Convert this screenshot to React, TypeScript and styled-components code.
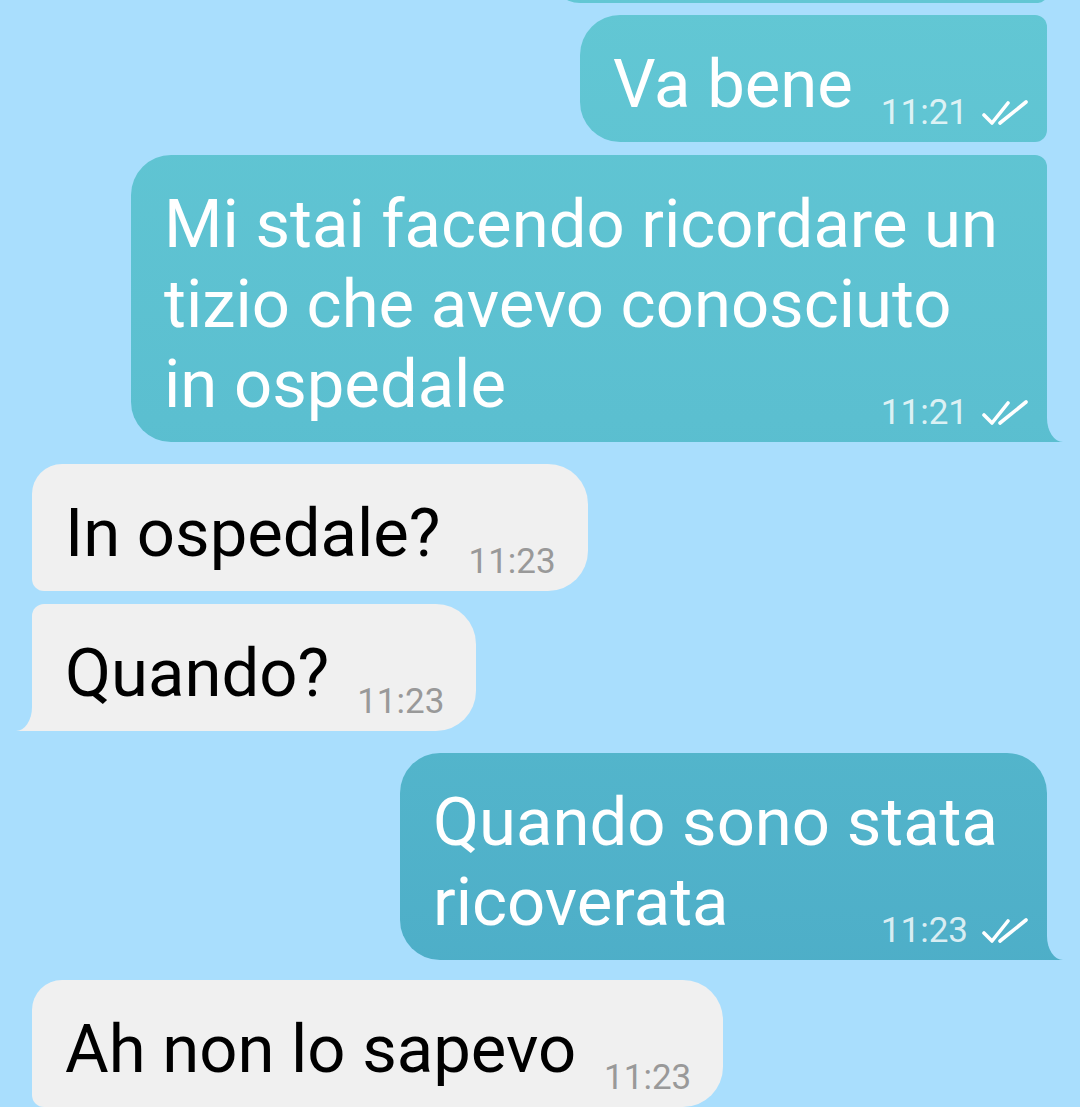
import React from "react";
import styled, { createGlobalStyle, css } from "styled-components";

const PAGE_BG = "#a9defd";
const OUT_BG = "linear-gradient(180deg, #62c7d4 0px, #5bbfd0 420px, #4aaac6 1107px) fixed";
const IN_BG = "#f0f0f0";

const GlobalStyle = createGlobalStyle`
  html, body {
    margin: 0;
    padding: 0;
    overflow: hidden;
    background: ${PAGE_BG};
  }
  body {
    font-family: Roboto, "Liberation Sans", sans-serif;
  }
`;

const Chat = styled.div`
  display: flex;
  flex-direction: column;
  padding: 0 33px 0 32px;
  height: 1107px;
  overflow: hidden;
`;

const PeekBubble = styled.div`
  align-self: flex-end;
  width: 497px;
  height: 60px;
  margin-top: -57px;
  background: ${OUT_BG};
  border-radius: 40px 12px 12px 40px;
`;

const tailCss = (out: boolean) => css`
  &::before,
  &::after {
    content: "";
    position: absolute;
    bottom: 0;
    height: 24px;
  }
  &::before {
    ${out ? "right: -16px;" : "left: -16px;"}
    width: 20px;
    background: ${out ? OUT_BG : IN_BG};
  }
  &::after {
    ${out ? "right: -30px;" : "left: -30px;"}
    width: 30px;
    background: ${PAGE_BG};
    ${out
      ? "border-bottom-left-radius: 16px 24px;"
      : "border-bottom-right-radius: 16px 24px;"}
  }
`;

const Bubble = styled.div<{ $out?: boolean; $radius: string; $gap: number; $tail?: boolean }>`
  position: relative;
  display: flow-root;
  align-self: ${(p) => (p.$out ? "flex-end" : "flex-start")};
  margin-top: ${(p) => p.$gap}px;
  padding: 29px ${(p) => (p.$out ? 49 : 32)}px 12px 33px;
  font-size: 67px;
  line-height: 80px;
  font-weight: 400;
  color: ${(p) => (p.$out ? "#ffffff" : "#000000")};
  background: ${(p) => (p.$out ? OUT_BG : IN_BG)};
  border-radius: ${(p) => p.$radius};
  white-space: nowrap;
  ${(p) => p.$tail && tailCss(!!p.$out)}
`;

const Meta = styled.span<{ $out?: boolean }>`
  float: right;
  display: flex;
  align-items: center;
  gap: 14px;
  margin: 51px ${(p) => (p.$out ? -30 : 0)}px 0 28px;
  font-size: 35px;
  line-height: 35px;
  color: ${(p) => (p.$out ? "rgba(255, 255, 255, 0.8)" : "#999999")};
`;

const Ticks = () => (
  <svg width="46" height="26" viewBox="0 0 46 26" fill="none">
    <path
      d="M2 15 L10 23 L26 3"
      stroke="#ffffff"
      strokeWidth="3.6"
      strokeLinecap="round"
      strokeLinejoin="round"
    />
    <path d="M18 23 L44 2" stroke="#ffffff" strokeWidth="3.6" strokeLinecap="round" />
  </svg>
);

type Msg = {
  lines: string[];
  time: string;
  out?: boolean;
  radius: string;
  gap: number;
  tail?: boolean;
};

const messages: Msg[] = [
  { lines: ["Va bene"], time: "11:21", out: true, radius: "40px 12px 12px 40px", gap: 12 },
  {
    lines: ["Mi stai facendo ricordare un", "tizio che avevo conosciuto", "in ospedale"],
    time: "11:21",
    out: true,
    radius: "40px 12px 0 40px",
    gap: 13,
    tail: true,
  },
  { lines: ["In ospedale?"], time: "11:23", radius: "30px 40px 40px 12px", gap: 22 },
  { lines: ["Quando?"], time: "11:23", radius: "12px 40px 40px 0", gap: 13, tail: true },
  {
    lines: ["Quando sono stata", "ricoverata"],
    time: "11:23",
    out: true,
    radius: "40px 40px 0 40px",
    gap: 22,
    tail: true,
  },
  { lines: ["Ah non lo sapevo"], time: "11:23", radius: "30px 40px 40px 12px", gap: 20 },
];

export default function App() {
  return (
    <>
      <GlobalStyle />
      <Chat>
        <PeekBubble />
        {messages.map((m, i) => (
          <Bubble key={i} $out={m.out} $radius={m.radius} $gap={m.gap} $tail={m.tail}>
            {m.lines.map((l, j) => (
              <React.Fragment key={j}>
                {j > 0 && <br />}
                {l}
              </React.Fragment>
            ))}
            <Meta $out={m.out}>
              {m.time}
              {m.out && <Ticks />}
            </Meta>
          </Bubble>
        ))}
      </Chat>
    </>
  );
}
